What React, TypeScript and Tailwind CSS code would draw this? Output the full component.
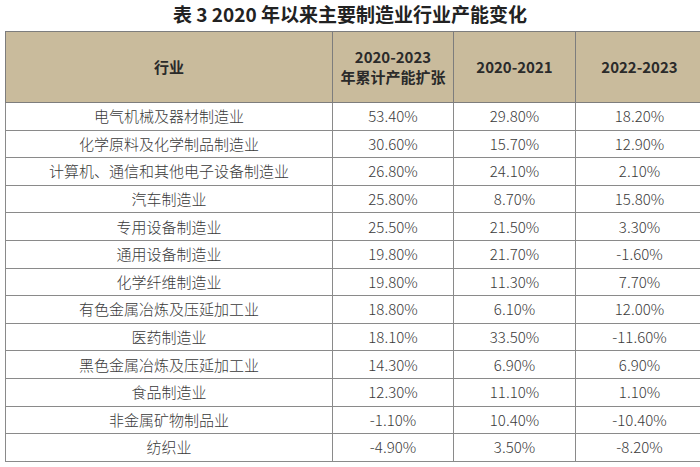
import React from "react";

const rows: [string, string, string, string][] = [
  ["电气机械及器材制造业", "53.40%", "29.80%", "18.20%"],
  ["化学原料及化学制品制造业", "30.60%", "15.70%", "12.90%"],
  ["计算机、通信和其他电子设备制造业", "26.80%", "24.10%", "2.10%"],
  ["汽车制造业", "25.80%", "8.70%", "15.80%"],
  ["专用设备制造业", "25.50%", "21.50%", "3.30%"],
  ["通用设备制造业", "19.80%", "21.70%", "-1.60%"],
  ["化学纤维制造业", "19.80%", "11.30%", "7.70%"],
  ["有色金属冶炼及压延加工业", "18.80%", "6.10%", "12.00%"],
  ["医药制造业", "18.10%", "33.50%", "-11.60%"],
  ["黑色金属冶炼及压延加工业", "14.30%", "6.90%", "6.90%"],
  ["食品制造业", "12.30%", "11.10%", "1.10%"],
  ["非金属矿物制品业", "-1.10%", "10.40%", "-10.40%"],
  ["纺织业", "-4.90%", "3.50%", "-8.20%"],
];

export default function App() {
  return (
    <div
      className="w-[700px] h-[467px] overflow-hidden bg-white text-[#333]"
      style={{ fontFamily: '"Noto Sans CJK SC", "Noto Sans", sans-serif' }}
    >
      <div className="h-[31px] flex items-center justify-center pb-[4px] text-[19px] font-bold text-[#222] leading-none">
        表 3 2020 年以来主要制造业行业产能变化
      </div>
      <table className="ml-[5px] w-[698px] border-collapse table-fixed">
        <colgroup>
          <col className="w-[327px]" />
          <col className="w-[121px]" />
          <col className="w-[122px]" />
          <col className="w-[128px]" />
        </colgroup>
        <thead>
          <tr className="h-[71px] bg-[#c9bb9c]">
            <th className="border border-[#7d7d7d] text-[15px] font-bold text-center leading-[20px] text-[#2a2a2a]">行业</th>
            <th className="border border-[#7d7d7d] text-[15px] font-bold text-center leading-[20px] text-[#2a2a2a]">
              2020-2023
              <br />
              年累计产能扩张
            </th>
            <th className="border border-[#7d7d7d] text-[15px] font-bold text-center leading-[20px] text-[#2a2a2a]">2020-2021</th>
            <th className="border border-[#7d7d7d] text-[15px] font-bold text-center leading-[20px] text-[#2a2a2a]">2022-2023</th>
          </tr>
        </thead>
        <tbody>
          {rows.map((r) => (
            <tr key={r[0]} className="h-[27.6px]">
              {r.map((c, i) => (
                <td
                  key={i}
                  className="border border-[#8a8a8a] text-center text-[15px] leading-[20px] p-0 font-light text-[#3a3a3a]"
                >
                  {c}
                </td>
              ))}
            </tr>
          ))}
        </tbody>
      </table>
    </div>
  );
}
